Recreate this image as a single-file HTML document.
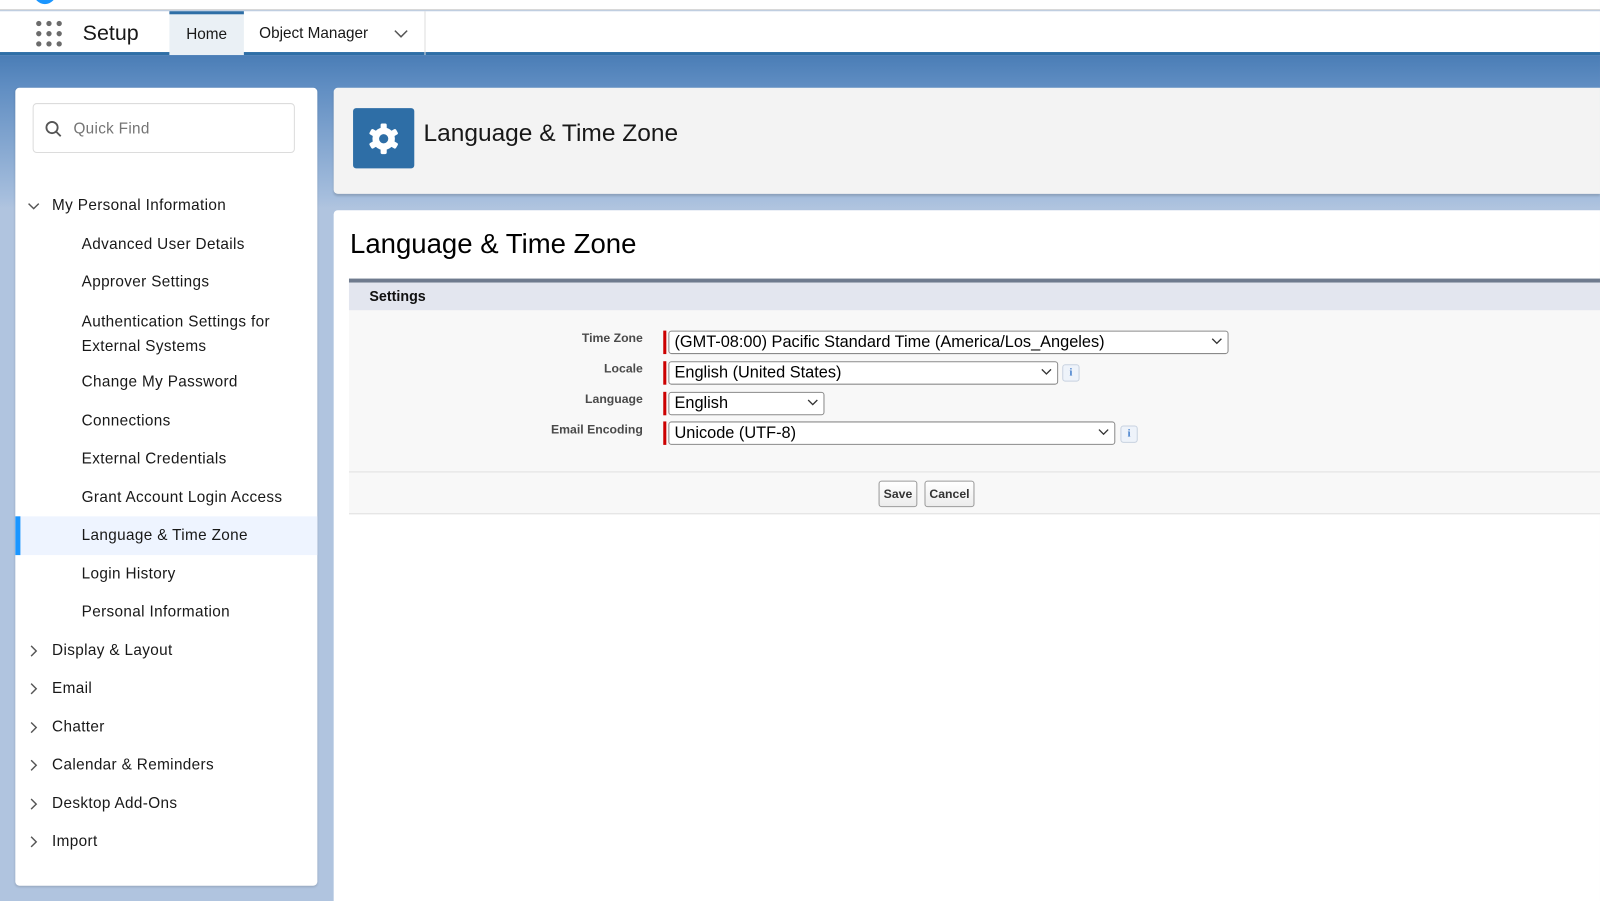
<!DOCTYPE html>
<html><head><style>
*{box-sizing:border-box;margin:0;padding:0}
html,body{width:1600px;height:901px;overflow:hidden}
body{font-family:"Liberation Sans",sans-serif;background:#b0c4df;position:relative;color:#181818}
#w{position:absolute;left:0;top:0;width:1568px;height:883px;transform:scale(1.0204);transform-origin:0 0}
.top{position:absolute;left:0;top:0;width:1568px;height:10px;background:#fff;border-bottom:1px solid #d0d0d0}
.logo{position:absolute;left:33px;top:-8px;width:22px;height:12px;border-radius:0 0 11px 11px;background:#1b96ff}
.nav{position:absolute;left:0;top:11px;width:1568px;height:43px;background:#fff;border-bottom:3px solid #2e6ea6}
.banner{position:absolute;left:0;top:54px;width:1568px;height:150px;background:linear-gradient(#4a7db6 0,#5f8dc2 30px,#a6bedd 140px,#b0c4df 150px)}
.side{position:absolute;left:15px;top:86px;width:296px;height:782px;background:#fff;border-radius:4px;box-shadow:0 1px 2px rgba(0,0,0,.15)}
.qf{position:absolute;left:17px;top:15px;width:257px;height:49px;border:1px solid #dcdcdc;border-radius:4px;font-size:15px;color:#747474;padding:16px 0 0 39px;letter-spacing:.3px}
.it{position:absolute;font-size:15px;color:#181818;white-space:nowrap;letter-spacing:.35px}
.chev{position:absolute;left:12px;width:12px;height:12px}
.hdr{position:absolute;left:327px;top:86px;width:1241px;height:104px;background:#f3f3f3;border-radius:4px 0 0 4px;box-shadow:0 2px 2px rgba(0,0,0,.15)}
.main{position:absolute;left:327px;top:206px;width:1241px;height:695px;background:#fff;border-radius:4px 0 0 0}
.lbl{position:absolute;font-size:12px;font-weight:bold;color:#4a4a4a;text-align:right;width:200px;left:430px}
.sel{position:absolute;height:23px;border:1px solid #8a8a8a;border-radius:3px;background:#fff;font-size:16px;padding:2px 0 0 5px;color:#000}
.sel:before{content:"";position:absolute;left:-6px;top:-1px;width:3px;height:23px;background:#c00}
.sel svg{position:absolute;right:5px;top:6px}
.info{position:absolute;width:17px;height:17px;border:1px solid #c8d2e0;border-radius:3px;background:#eef3fa;color:#3a78c9;font-size:10px;font-weight:bold;text-align:center;line-height:15px;font-family:"Liberation Serif",serif}
.btn{position:absolute;top:471px;height:26px;border:1px solid #9a9a9a;border-radius:3px;background:linear-gradient(#fff,#ececec);font-size:12px;font-weight:bold;text-align:center;line-height:24px;color:#333}
</style></head><body><div id="w">
<div class="top"><div class="logo"></div></div>
<div class="nav">
<svg style="position:absolute;left:35px;top:9px" width="26" height="26" viewBox="0 0 26 26" fill="#6b6b6b"><circle cx="3" cy="3" r="2.6"/><circle cx="13" cy="3" r="2.6"/><circle cx="23" cy="3" r="2.6"/><circle cx="3" cy="13" r="2.6"/><circle cx="13" cy="13" r="2.6"/><circle cx="23" cy="13" r="2.6"/><circle cx="3" cy="23" r="2.6"/><circle cx="13" cy="23" r="2.6"/><circle cx="23" cy="23" r="2.6"/></svg>
<div style="position:absolute;left:81px;top:10px;font-size:21px">Setup</div>
<div style="position:absolute;left:166px;top:0;width:73px;height:43px;background:#eaf0f5;border-top:3px solid #2e6ea6;font-size:15px;text-align:center;padding-top:11px">Home</div>
<div style="position:absolute;left:254px;top:13px;font-size:15px">Object Manager</div>
<svg style="position:absolute;left:386px;top:18px" width="14" height="9" viewBox="0 0 14 9"><path d="M1 1l6 6 6-6" fill="none" stroke="#555" stroke-width="1.5"/></svg>
<div style="position:absolute;left:416px;top:0;width:1px;height:43px;background:#ddd"></div>
</div>
<div class="banner"></div>
<div class="side">
<div class="qf">Quick Find</div>
<svg style="position:absolute;left:29px;top:32px" width="17" height="17" viewBox="0 0 17 17"><circle cx="7" cy="7" r="5.5" fill="none" stroke="#555" stroke-width="1.8"/><path d="M11 11l4.5 4.5" stroke="#555" stroke-width="1.8"/></svg>
<svg class="chev" style="top:110px" viewBox="0 0 12 12"><path d="M1 3.5l5 5 5-5" fill="none" stroke="#555" stroke-width="1.4"/></svg>
<div class="it" style="left:36px;top:107px">My Personal Information</div>
<div class="it" style="left:65px;top:145px">Advanced User Details</div>
<div class="it" style="left:65px;top:182px">Approver Settings</div>
<div class="it" style="left:65px;top:218px;line-height:24px;white-space:normal;width:215px">Authentication Settings for External Systems</div>
<div class="it" style="left:65px;top:280px">Change My Password</div>
<div class="it" style="left:65px;top:318px">Connections</div>
<div class="it" style="left:65px;top:355px">External Credentials</div>
<div class="it" style="left:65px;top:393px">Grant Account Login Access</div>
<div style="position:absolute;left:0;top:420px;width:296px;height:38px;background:#eef4ff;border-left:5px solid #1b96ff"></div>
<div class="it" style="left:65px;top:430px">Language &amp; Time Zone</div>
<div class="it" style="left:65px;top:468px">Login History</div>
<div class="it" style="left:65px;top:505px">Personal Information</div>
<div class="it" style="left:36px;top:543px">Display &amp; Layout</div>
<div class="it" style="left:36px;top:580px">Email</div>
<div class="it" style="left:36px;top:618px">Chatter</div>
<div class="it" style="left:36px;top:655px">Calendar &amp; Reminders</div>
<div class="it" style="left:36px;top:693px">Desktop Add-Ons</div>
<div class="it" style="left:36px;top:730px">Import</div>
<svg class="chev" style="top:546px" viewBox="0 0 12 12"><path d="M3.5 1l5 5-5 5" fill="none" stroke="#555" stroke-width="1.4"/></svg>
<svg class="chev" style="top:583px" viewBox="0 0 12 12"><path d="M3.5 1l5 5-5 5" fill="none" stroke="#555" stroke-width="1.4"/></svg>
<svg class="chev" style="top:621px" viewBox="0 0 12 12"><path d="M3.5 1l5 5-5 5" fill="none" stroke="#555" stroke-width="1.4"/></svg>
<svg class="chev" style="top:658px" viewBox="0 0 12 12"><path d="M3.5 1l5 5-5 5" fill="none" stroke="#555" stroke-width="1.4"/></svg>
<svg class="chev" style="top:696px" viewBox="0 0 12 12"><path d="M3.5 1l5 5-5 5" fill="none" stroke="#555" stroke-width="1.4"/></svg>
<svg class="chev" style="top:733px" viewBox="0 0 12 12"><path d="M3.5 1l5 5-5 5" fill="none" stroke="#555" stroke-width="1.4"/></svg>
</div>
<div class="hdr">
<div style="position:absolute;left:19px;top:20px;width:60px;height:59px;background:#2e6ea6;border-radius:3px"></div>
<svg style="position:absolute;left:31px;top:32px" width="36" height="36" viewBox="0 0 36 36"><g fill="#fff"><circle cx="18" cy="18" r="11"/><rect x="15" y="3" width="6" height="30" rx="1.5"/><rect x="15" y="3" width="6" height="30" rx="1.5" transform="rotate(60 18 18)"/><rect x="15" y="3" width="6" height="30" rx="1.5" transform="rotate(120 18 18)"/></g><circle cx="18" cy="18" r="4.5" fill="#2e6ea6"/></svg>
<div style="position:absolute;left:88px;top:31px;font-size:24px;color:#181818">Language &amp; Time Zone</div>
</div>
<div class="main">
<div style="position:absolute;left:16px;top:18px;font-size:27px;color:#000">Language &amp; Time Zone</div>
<div style="position:absolute;left:15px;top:67px;width:1226px;height:231px;background:#f8f8f8;border-top:4px solid #6f7b8e;border-bottom:1px solid #e0e0e0"></div>
<div style="position:absolute;left:15px;top:71px;width:1226px;height:27px;background:#e3e6ef"></div>
<div style="position:absolute;left:35px;top:76px;font-size:14px;font-weight:bold;color:#111">Settings</div>
<div style="position:absolute;left:15px;top:256px;width:1226px;height:1px;background:#e0e0e0"></div>
</div>
<div class="lbl" style="top:324px">Time Zone</div>
<div class="lbl" style="top:354px">Locale</div>
<div class="lbl" style="top:384px">Language</div>
<div class="lbl" style="top:414px">Email Encoding</div>
<div class="sel" style="left:655px;top:324px;width:549px">(GMT-08:00) Pacific Standard Time (America/Los_Angeles)<svg width="11" height="7" viewBox="0 0 11 7"><path d="M1 1l4.5 4.5L10 1" fill="none" stroke="#333" stroke-width="1.3"/></svg></div>
<div class="sel" style="left:655px;top:354px;width:382px">English (United States)<svg width="11" height="7" viewBox="0 0 11 7"><path d="M1 1l4.5 4.5L10 1" fill="none" stroke="#333" stroke-width="1.3"/></svg></div>
<div class="info" style="left:1041px;top:357px">i</div>
<div class="sel" style="left:655px;top:384px;width:153px">English<svg width="11" height="7" viewBox="0 0 11 7"><path d="M1 1l4.5 4.5L10 1" fill="none" stroke="#333" stroke-width="1.3"/></svg></div>
<div class="sel" style="left:655px;top:413px;width:438px">Unicode (UTF-8)<svg width="11" height="7" viewBox="0 0 11 7"><path d="M1 1l4.5 4.5L10 1" fill="none" stroke="#333" stroke-width="1.3"/></svg></div>
<div class="info" style="left:1098px;top:417px">i</div>
<div class="btn" style="left:861px;width:38px">Save</div>
<div class="btn" style="left:906px;width:49px">Cancel</div>
</div></body></html>
